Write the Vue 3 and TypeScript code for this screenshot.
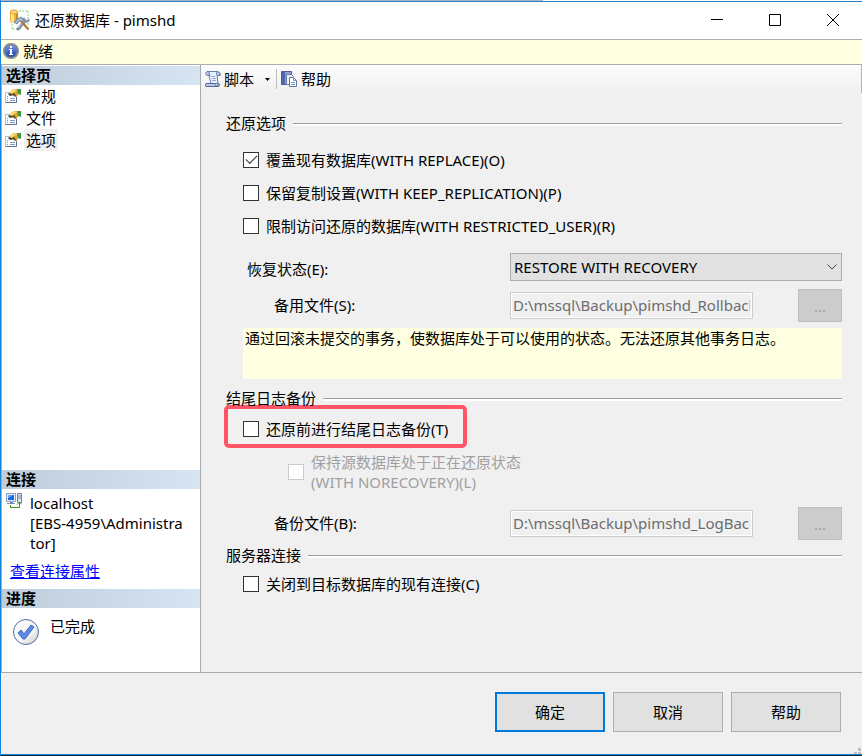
<script setup lang="ts">
import { ref } from 'vue'

const pages = ['常规', '文件', '选项']
const activePage = ref('选项')

const restoreOptions = ref([
  { id: 'replace', label: '覆盖现有数据库(WITH REPLACE)(O)', checked: true },
  { id: 'keep', label: '保留复制设置(WITH KEEP_REPLICATION)(P)', checked: false },
  { id: 'restricted', label: '限制访问还原的数据库(WITH RESTRICTED_USER)(R)', checked: false },
])

const recoveryStates = ['RESTORE WITH RECOVERY', 'RESTORE WITH NORECOVERY', 'RESTORE WITH STANDBY']
const recoveryState = ref(recoveryStates[0])
const standbyFile = ref('D:\\mssql\\Backup\\pimshd_RollbackUndo')
const tailLogFile = ref('D:\\mssql\\Backup\\pimshd_LogBackup')
const tailLog = ref(false)
const noRecovery = ref(false)
const closeConnections = ref(false)
</script>

<template>
  <div class="window">
    <div class="backdrop"><span class="backdrop-left"></span></div>
    <header class="titlebar">
      <svg class="app-icon" viewBox="0 0 22 22" aria-hidden="true">
        <path d="M10 2h9v15M3 12v8h9" fill="none" stroke="#7fd67a" stroke-dasharray="2 1" />
        <path d="M1 3v9c0 3 8 3 8 0V3z" fill="#edb632" />
        <path d="M2 4v9c1 1 2 1 3 1V5z" fill="#ffe38b" />
        <path d="M7 5v8l2-1V3z" fill="#c98b18" />
        <ellipse cx="5" cy="3" rx="4" ry="2" fill="#fbd873" stroke="#dda52d" />
        <path d="M16 12l-7 8" stroke="#77899f" stroke-width="3" stroke-linecap="round" />
        <path d="M16 11l-7 8" stroke="#d7e0eb" stroke-width="1" />
        <path d="M15 8l2 3 4-1-1 3-4 1-3-3z" fill="#8798ab" />
        <path d="M12 12l7 8" stroke="#b3752d" stroke-width="2" stroke-linecap="round" />
        <path d="M7 11l5-3 3 3-3 2-2-1-2 3-3-2z" fill="#a9b5c4" stroke="#76879b" stroke-width="1" />
      </svg>
      <h1>还原数据库 - pimshd</h1>
      <div class="window-controls">
        <button type="button" aria-label="最小化">
          <svg viewBox="0 0 12 12"><path d="M0 5.5h12" /></svg>
        </button>
        <button type="button" aria-label="最大化">
          <svg viewBox="0 0 12 12"><path d="M.5.5h11v11H.5z" /></svg>
        </button>
        <button type="button" aria-label="关闭">
          <svg viewBox="0 0 12 12"><path d="M0 0l12 12M12 0L0 12" /></svg>
        </button>
      </div>
    </header>

    <div class="status" role="status">
      <svg class="info-icon" viewBox="0 0 16 16" aria-hidden="true">
        <defs>
          <linearGradient id="infoFill" x2="0" y2="1">
            <stop stop-color="#7b9dea" /><stop offset="1" stop-color="#173fae" />
          </linearGradient>
        </defs>
        <circle cx="8" cy="8" r="7" fill="url(#infoFill)" stroke="#85898f" stroke-width="2" />
        <path d="M7 3h2v2H7zM6 6h3v5h1v1H6v-1h1V7H6z" fill="#fff" />
      </svg>
      <span>就绪</span>
    </div>

    <div class="body">
      <aside class="sidebar">
        <section class="pages">
          <h2>选择页</h2>
          <ul>
            <li v-for="page in pages" :key="page">
              <button type="button" class="page" @click="activePage = page">
                <svg class="page-icon" viewBox="0 0 16 16" aria-hidden="true">
                  <path d="M.5 4.500h11v10H.5z" fill="#fbfdff" stroke="#b4bfd0" />
                  <path d="M11.500 9v5.500H.5" fill="none" stroke="#62708d" />
                  <path d="M2 8.500h1M2 10.500h1M2 12.500h1M5 10.500h5M5 12.500h5" stroke="#8297bb" />
                  <path d="M4 5l3-3 2-1h4v6l-2 2-2-2-3 1z" fill="#dda62c" />
                  <path d="M4 5l4-4 5 1-4 2-2 2z" fill="#f8dc70" />
                  <path d="M4 5l3 1 2-1 2 3-1 1-2-2-3 1-2-2z" fill="#4b4638" />
                  <path d="M12 1h4v6l-3-1z" fill="#3f993c" />
                </svg>
                <span :class="{ active: page === activePage }">{{ page }}</span>
              </button>
            </li>
          </ul>
        </section>

        <section class="connection">
          <h2>连接</h2>
          <div class="server">
            <svg class="server-icon" viewBox="0 0 16 16" aria-hidden="true">
              <path d="M.5.5h9v8h-9z" fill="#e4ebf5" stroke="#8ca0c1" />
              <path d="M2 2h6v5H2z" fill="#1868e6" />
              <path d="M2 2h5L3 5H2z" fill="#65a5ff" />
              <path d="M4 9h3v1h2v1H1v-1h3z" fill="#758bb3" />
              <path d="M11.500.5h4v9h-4z" fill="#dce3ee" stroke="#7082a2" />
              <path d="M12 3h3M12 5h3" stroke="#788bab" />
              <path d="M4.500 12v2.500h9v-5M11 11.500l2.500-2.500 2.500 2.500" fill="none" stroke="#37961c" stroke-width="1" />
            </svg>
            <p>localhost<br />[EBS-4959\Administrator]</p>
          </div>
          <a href="#connection">查看连接属性</a>
        </section>

        <section class="progress">
          <h2>进度</h2>
          <div class="progress-state">
            <svg class="done-icon" viewBox="0 0 26 26" aria-hidden="true">
              <defs>
                <linearGradient id="doneFill" x2="1" y2="1">
                  <stop stop-color="#fff" /><stop offset=".6" stop-color="#f4f4f4" /><stop offset="1" stop-color="#c8c8c8" />
                </linearGradient>
              </defs>
              <circle cx="13" cy="13" r="12.500" fill="url(#doneFill)" stroke="#506d9f" />
              <path d="M5 14l3-3 3 4 7-9 3 2-9 12h-2z" fill="#5b8ce8" stroke="#3b67bd" stroke-width="1" />
            </svg>
            <span>已完成</span>
          </div>
        </section>
      </aside>

      <main class="content">
        <div class="toolbar">
          <button type="button" class="tool script-tool">
            <svg class="tool-icon" viewBox="0 0 16 16" aria-hidden="true">
              <path d="M3 .5h10l2 2v2h-3l1 8H6L4 5z" fill="#e5efff" stroke="#6b7fa8" />
              <path d="M3 .5c-3 0-3 4 0 4h2l-1-3z" fill="#b6c9ea" stroke="#6179a5" />
              <path d="M13 .5c-2 0-2 4 0 4h2v-2z" fill="#b6c9ea" stroke="#6179a5" />
              <path d="M1 12.500h9c0 3 3 3 3 0 2 0 2 3 0 3H1c-1 0-1-3 0-3z" fill="#b8c9e8" stroke="#526a99" />
              <path d="M6 5.500h4M7 7.500h4M7 9.500h4" stroke="#8fabda" />
            </svg>
            <span>脚本</span>
            <svg class="caret" viewBox="0 0 5 3" aria-hidden="true"><path d="M0 0h5L2.500 3z" /></svg>
          </button>
          <button type="button" class="tool">
            <svg class="tool-icon" viewBox="0 0 16 16" aria-hidden="true">
              <path d="M.5.500h10v13H.5z" fill="#8f9ed6" stroke="#4d5b98" />
              <path d="M1 1h3v12H1z" fill="#5265aa" />
              <path d="M5.500 3.500h5l2 2v8h-7z" fill="#e8eefa" stroke="#6d7da9" />
              <path d="M8.500 6.500h4l3 3v6h-7z" fill="#fff" stroke="#65749c" />
              <path d="M12.500 6.500v3h3M10 11.500h4M10 13.500h4" fill="none" stroke="#7e92bb" />
            </svg>
            <span>帮助</span>
          </button>
        </div>

        <form class="options" @submit.prevent>
          <section>
            <h3>还原选项</h3>
            <div class="checks">
              <label v-for="option in restoreOptions" :key="option.id" class="check">
                <input v-model="option.checked" type="checkbox" />
                <span>{{ option.label }}</span>
              </label>
            </div>
            <div class="field state-field">
              <label for="recovery">恢复状态(E):</label>
              <div class="select-box">
                <select id="recovery" v-model="recoveryState">
                  <option v-for="state in recoveryStates" :key="state">{{ state }}</option>
                </select>
                <svg viewBox="0 0 10 6" aria-hidden="true"><path d="M.5.500L5 5 9.500.500" /></svg>
              </div>
            </div>
            <div class="field nested">
              <label for="standby">备用文件(S):</label>
              <div class="file-box">
                <input id="standby" v-model="standbyFile" type="text" disabled />
                <button type="button" disabled aria-label="浏览备用文件">...</button>
              </div>
            </div>
            <p class="hint">通过回滚未提交的事务，使数据库处于可以使用的状态。无法还原其他事务日志。</p>
          </section>

          <section>
            <h3>结尾日志备份</h3>
            <div class="highlight">
              <label class="check">
                <input v-model="tailLog" type="checkbox" />
                <span>还原前进行结尾日志备份(T)</span>
              </label>
            </div>
            <label class="check disabled-check">
              <input v-model="noRecovery" type="checkbox" disabled />
              <span>保持源数据库处于正在还原状态<br />(WITH NORECOVERY)(L)</span>
            </label>
            <div class="field nested">
              <label for="tail">备份文件(B):</label>
              <div class="file-box">
                <input id="tail" v-model="tailLogFile" type="text" disabled />
                <button type="button" disabled aria-label="浏览备份文件">...</button>
              </div>
            </div>
          </section>

          <section>
            <h3>服务器连接</h3>
            <label class="check close-check">
              <input v-model="closeConnections" type="checkbox" />
              <span>关闭到目标数据库的现有连接(C)</span>
            </label>
          </section>
        </form>
      </main>
    </div>

    <footer>
      <button type="button" class="primary">确定</button>
      <button type="button">取消</button>
      <button type="button">帮助</button>
      <svg class="grip" viewBox="0 0 8 6" aria-hidden="true"><path d="M4 0h3v3H4zM0 4h3v2H0zM4 4h3v2H4z" /></svg>
    </footer>
  </div>
</template>

<style>
body {
  margin: 0;
}
</style>

<style scoped>
* {
  box-sizing: border-box;
}
.window {
  display: flex;
  flex-direction: column;
  min-height: 100vh;
  border-left: 1px solid #1883d7;
  border-bottom: 1px solid #0a2a4d;
  background: #f0f0f0;
  color: #000;
  font: 15px/20px "Noto Sans", "Noto Sans CJK SC", sans-serif;
}
button,
input,
select {
  margin: 0;
  font: inherit;
  color: inherit;
}
h1,
h2,
h3,
p,
ul {
  margin: 0;
  padding: 0;
  font-size: 15px;
  font-weight: 400;
}
svg {
  flex: none;
  display: block;
}
.backdrop {
  height: 2px;
  border-bottom: 1px solid #2b7fbf;
  background: #fff;
}
.backdrop-left {
  display: block;
  width: 63%;
  height: 1px;
  background: #a9b4c6;
}
.titlebar {
  display: flex;
  align-items: center;
  height: 37px;
  padding: 0 0 2px 8px;
  background: #fff;
}
.app-icon {
  width: 22px;
  height: 22px;
}
.titlebar h1 {
  margin-left: 4px;
}
.window-controls {
  display: flex;
  margin-left: auto;
}
.window-controls button {
  display: grid;
  place-items: center;
  width: 58px;
  height: 34px;
  padding: 0;
  border: 0;
  background: none;
}
.window-controls svg {
  width: 12px;
  height: 12px;
  overflow: visible;
  fill: none;
  stroke: #000;
}
.status {
  display: flex;
  align-items: center;
  gap: 4px;
  height: 26px;
  padding: 0 0 2px 2px;
  border: 1px solid #acacb3;
  border-width: 1px 0;
  background: #ffffe1;
}
.info-icon {
  width: 16px;
  height: 16px;
}
.body {
  display: flex;
  flex: 1;
  border-bottom: 1px solid #a9a9ae;
}
.sidebar {
  display: flex;
  flex: none;
  flex-direction: column;
  width: 200px;
  padding-top: 1px;
  border: 1px solid #a9a9ae;
  border-width: 0 1px;
  background: #fff;
}
.sidebar h2 {
  height: 19px;
  padding-left: 4px;
  background: linear-gradient(90deg, #bfcddb, #d7e4f2);
  font-weight: 700;
  line-height: 19px;
}
.pages {
  flex: 1;
}
.pages ul {
  list-style: none;
}
.page {
  display: flex;
  align-items: center;
  gap: 3px;
  width: 100%;
  height: 22px;
  padding: 0 0 0 3px;
  border: 0;
  background: none;
  text-align: left;
}
.page-icon {
  width: 16px;
  height: 16px;
}
.page span {
  padding: 0 2px;
  line-height: 22px;
}
.page .active {
  background: #f0f0f0;
}
.connection {
  height: 119px;
}
.server {
  display: flex;
  gap: 8px;
  padding: 4px 12px 0 4px;
}
.server p {
  word-break: break-all;
}
.server-icon,
.tool-icon {
  width: 16px;
  height: 16px;
}
.connection a {
  display: inline-block;
  margin: 8px 0 0 8px;
  color: #00f;
}
.progress {
  height: 83px;
}
.progress-state {
  display: flex;
  gap: 11px;
  padding: 8px 0 0 11px;
}
.done-icon {
  width: 26px;
  height: 26px;
  margin-top: 3px;
}
.content {
  flex: 1;
  min-width: 0;
}
.toolbar {
  display: flex;
  align-items: center;
  height: 28px;
  border-right: 1px solid #b5b5b8;
  background: linear-gradient(#fcfcfd, #f0f0f0);
}
.tool {
  display: flex;
  align-items: center;
  gap: 4px;
  height: 20px;
  padding: 0 4px;
  border: 0;
  background: none;
}
.script-tool {
  gap: 3px;
  padding-right: 6px;
  border-right: 1px solid #bdbdbd;
}
.caret {
  width: 5px;
  height: 3px;
  margin-left: 8px;
}
.options {
  padding: 20px 20px 16px 25px;
}
h3 {
  display: flex;
  align-items: center;
  gap: 7px;
  height: 20px;
  line-height: 20px;
}
h3::after {
  content: "";
  flex: 1;
  height: 2px;
  margin-top: 2px;
  border-top: 1px solid #a0a0a0;
  background: #fff;
}
.checks {
  padding: 10px 0 0 17px;
}
.check {
  display: flex;
  align-items: center;
  gap: 7px;
  height: 33px;
}
.check input {
  display: grid;
  flex: none;
  place-items: center;
  width: 16px;
  height: 16px;
  appearance: none;
  border: 1px solid #333;
  background: #fff;
}
.check input:checked::after {
  content: "";
  width: 10px;
  height: 5px;
  margin-bottom: 4px;
  border: solid #333;
  border-width: 0 0 1px 1px;
  transform: rotate(-45deg);
}
.field {
  display: grid;
  grid-template-columns: 284px minmax(0, 1fr);
  align-items: center;
}
.field > label {
  padding: 0 0 2px 21px;
}
.nested > label {
  padding-left: 48px;
}
.state-field {
  height: 28px;
  margin: 11px 0 8px;
}
.state-field > label {
  padding: 4px 0 0 21px;
}
.select-box {
  display: grid;
  align-items: center;
}
.select-box > * {
  grid-area: 1 / 1;
}
.select-box select {
  width: 100%;
  height: 28px;
  padding: 0 3px;
  appearance: none;
  border: 1px solid #adadad;
  border-radius: 0;
  background: #e1e1e1;
}
.select-box svg {
  justify-self: end;
  width: 10px;
  height: 6px;
  margin-right: 5px;
  fill: none;
  stroke: #444;
  pointer-events: none;
}
.file-box {
  display: flex;
  align-items: center;
  justify-content: space-between;
  gap: 45px;
}
.file-box input {
  flex: 1;
  min-width: 0;
  height: 27px;
  padding: 0 2px 2px;
  border: 1px solid #ccc;
  outline: 1px solid #fff;
  outline-offset: -2px;
  background: #f0f0f0;
  color: #6d6d6d;
}
.file-box button {
  width: 44px;
  height: 33px;
  padding: 0;
  border: 1px solid #bfbfbf;
  background: #ccc;
  color: #a0a0a0;
}
.hint {
  min-height: 51px;
  margin: 6px 0 9px 17px;
  padding: 0 2px;
  background: #ffffe1;
}
.highlight {
  width: fit-content;
  margin: -3px 0 0 -2px;
  padding: 5px 15px 0;
  border: 4px solid #ff5567;
  border-radius: 5px;
}
.highlight .check {
  height: 30px;
}
.disabled-check {
  height: 40px;
  margin: 4px 0 15px 62px;
  color: #a0a0a0;
}
.disabled-check input {
  border-color: #ccc;
}
section + section .nested {
  margin-bottom: 5px;
}
.close-check {
  padding-left: 17px;
  height: 38px;
}
footer {
  display: flex;
  align-items: flex-start;
  justify-content: flex-end;
  gap: 8px;
  height: 82px;
  padding: 19px 0 0 20px;
  border-bottom: 1px solid #1883d7;
}
footer button {
  width: 110px;
  height: 40px;
  border: 1px solid #adadad;
  background: #e1e1e1;
}
footer .primary {
  border: 2px solid #0078d7;
}
.grip {
  align-self: flex-end;
  width: 8px;
  height: 6px;
  margin-left: 5px;
  fill: #bfbfbf;
}
</style>
